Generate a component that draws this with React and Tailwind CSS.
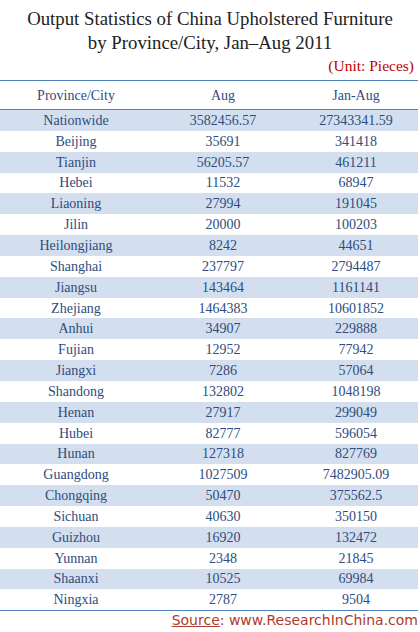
import React from "react";

const rows = [
  ["Nationwide", "3582456.57", "27343341.59"],
  ["Beijing", "35691", "341418"],
  ["Tianjin", "56205.57", "461211"],
  ["Hebei", "11532", "68947"],
  ["Liaoning", "27994", "191045"],
  ["Jilin", "20000", "100203"],
  ["Heilongjiang", "8242", "44651"],
  ["Shanghai", "237797", "2794487"],
  ["Jiangsu", "143464", "1161141"],
  ["Zhejiang", "1464383", "10601852"],
  ["Anhui", "34907", "229888"],
  ["Fujian", "12952", "77942"],
  ["Jiangxi", "7286", "57064"],
  ["Shandong", "132802", "1048198"],
  ["Henan", "27917", "299049"],
  ["Hubei", "82777", "596054"],
  ["Hunan", "127318", "827769"],
  ["Guangdong", "1027509", "7482905.09"],
  ["Chongqing", "50470", "375562.5"],
  ["Sichuan", "40630", "350150"],
  ["Guizhou", "16920", "132472"],
  ["Yunnan", "2348", "21845"],
  ["Shaanxi", "10525", "69984"],
  ["Ningxia", "2787", "9504"],
];

const serif = { fontFamily: '"Liberation Serif", "Times New Roman", serif' };

const App = () => {
  return (
    <div className="w-[420px] h-[632px] bg-white overflow-hidden" style={serif}>
      {/* Title */}
      <div className="pt-[7px] text-center text-[18.8px] leading-[24px] text-[#222]">
        <div>Output Statistics of China Upholstered Furniture</div>
        <div>by Province/City, Jan–Aug 2011</div>
      </div>
      <div className="h-[20px] flex items-end justify-end pr-[6px] text-[15.5px] leading-[18px] text-[#c00000]">
        (Unit: Pieces)
      </div>

      {/* Table */}
      <div className="w-[418px] mt-[5px] border-t border-b border-[#4f81bd] text-[14px] text-[#2f4c7e]" style={serif}>
        <div className="flex h-[29px] items-center border-b border-[#4f81bd]">
          <div className="w-[152px] text-center">Province/City</div>
          <div className="w-[142px] text-center">Aug</div>
          <div className="w-[124px] text-center">Jan-Aug</div>
        </div>
        {rows.map((r, i) => (
          <div
            key={r[0]}
            className={`flex h-[20.85px] items-center ${i % 2 === 0 ? "bg-[#d3dfee]" : "bg-white"}`}
          >
            <div className="w-[152px] text-center">{r[0]}</div>
            <div className="w-[142px] text-center">{r[1]}</div>
            <div className="w-[124px] text-center">{r[2]}</div>
          </div>
        ))}
      </div>

      {/* Source */}
      <div className="flex justify-end pr-[2px] pt-[1px] text-[14px] leading-[17px] text-[#b03a2e]" style={{ fontFamily: '"DejaVu Sans", sans-serif' }}>
        <span className="underline">Source</span>
        <span>: www.ResearchInChina.com</span>
      </div>
    </div>
  );
};

export default App;
